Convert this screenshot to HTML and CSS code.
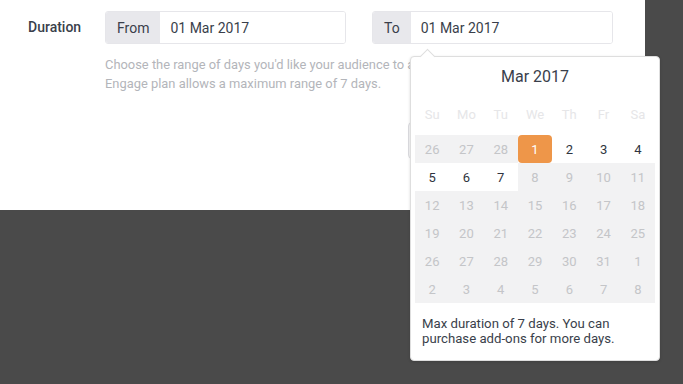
FILE: index.html
```html
<!DOCTYPE html>
<html lang="en">
<head>
  <meta charset="UTF-8">
  <title>Duration</title>
  <link rel="stylesheet" href="styles.css">
</head>
<body>
  <div class="panel">
    <div class="field">
      <label class="field-label">Duration</label>
      <div class="field-body">
        <div class="range">
          <div class="input-group from">
            <span class="addon">From</span>
            <input type="text" value="01 Mar 2017">
          </div>
          <div class="input-group to">
            <span class="addon">To</span>
            <input type="text" value="01 Mar 2017">
          </div>
        </div>
        <p class="help">Choose the range of days you'd like your audience to a<br>Engage plan allows a maximum range of 7 days.</p>
        <div class="actions">
          <button class="btn" aria-label="Save"></button>
        </div>
      </div>
    </div>
  </div>

  <div class="datepicker">
    <div class="dp-title">Mar 2017</div>
    <div class="dp-weekdays">
      <span>Su</span><span>Mo</span><span>Tu</span><span>We</span><span>Th</span><span>Fr</span><span>Sa</span>
    </div>
    <div class="dp-grid">
      <span class="day off">26</span><span class="day off">27</span><span class="day off">28</span><span class="day selected">1</span><span class="day">2</span><span class="day">3</span><span class="day">4</span>
      <span class="day">5</span><span class="day">6</span><span class="day">7</span><span class="day off">8</span><span class="day off">9</span><span class="day off">10</span><span class="day off">11</span>
      <span class="day off">12</span><span class="day off">13</span><span class="day off">14</span><span class="day off">15</span><span class="day off">16</span><span class="day off">17</span><span class="day off">18</span>
      <span class="day off">19</span><span class="day off">20</span><span class="day off">21</span><span class="day off">22</span><span class="day off">23</span><span class="day off">24</span><span class="day off">25</span>
      <span class="day off">26</span><span class="day off">27</span><span class="day off">28</span><span class="day off">29</span><span class="day off">30</span><span class="day off">31</span><span class="day off">1</span>
      <span class="day off">2</span><span class="day off">3</span><span class="day off">4</span><span class="day off">5</span><span class="day off">6</span><span class="day off">7</span><span class="day off">8</span>
    </div>
    <p class="dp-note">Max duration of 7 days. You can purchase add-ons for more days.</p>
  </div>
</body>
</html>
```

FILE: styles.css
```css
* {
  box-sizing: border-box;
  font-family: Roboto, 'Liberation Sans', sans-serif;
}

body {
  margin: 0;
  background: #4a4a4a;
  width: 683px;
  height: 384px;
  overflow: hidden;
  position: relative;
}

.panel {
  width: 645px;
  height: 210px;
  background: white;
  padding: 11px 0 0 28px;
}

.field {
  display: flex;
}

.field-label {
  width: 77px;
  padding-top: 8px;
  font-size: 14px;
  font-weight: 500;
  color: #3a3f4b;
}

.range {
  display: flex;
  gap: 26px;
}

.input-group {
  display: flex;
  width: 241px;
  height: 33px;
  border: 1px solid #e6e6ea;
  border-radius: 3px;
  overflow: hidden;
}

.addon {
  display: flex;
  align-items: center;
  background: #e8e8ec;
  color: #3a3f4b;
  font-size: 14px;
  padding: 0 11px;
}

.input-group input {
  flex: 1;
  min-width: 0;
  border: none;
  outline: none;
  padding: 0 10px;
  font-size: 14px;
  color: #3a3f4b;
  background: white;
}

.help {
  margin: 11px 0 0;
  font-size: 12.9px;
  line-height: 19px;
  color: #b3b5ba;
}

.actions {
  display: flex;
  justify-content: flex-end;
  width: 540px;
  margin-top: 29px;
}

.btn {
  width: 237px;
  height: 37px;
  border: 1px solid #dcdce0;
  border-radius: 4px;
  background: #f6f6f7;
}

.datepicker {
  position: absolute;
  left: 410px;
  top: 56px;
  width: 250px;
  height: 305px;
  background: white;
  border: 1px solid #dedede;
  border-radius: 4px;
  box-shadow: 0 1px 3px rgba(0,0,0,0.15);
  padding: 0 4px;
}

.datepicker::before {
  content: "";
  position: absolute;
  left: 11px;
  top: -6px;
  width: 10px;
  height: 10px;
  background: white;
  border-left: 1px solid #dedede;
  border-top: 1px solid #dedede;
  transform: rotate(45deg);
}

.dp-title {
  text-align: center;
  font-size: 16px;
  color: #3a3f4b;
  padding-top: 10px;
  height: 47px;
}

.dp-weekdays {
  display: grid;
  grid-template-columns: repeat(7, 1fr);
  width: 240px;
  height: 31px;
  padding-top: 3px;
  font-size: 13px;
  color: #e6e6e8;
  text-align: center;
}

.dp-grid {
  display: grid;
  grid-template-columns: repeat(7, 1fr);
  grid-auto-rows: 28px;
  width: 240px;
}

.day {
  display: flex;
  align-items: center;
  justify-content: center;
  font-size: 13px;
  color: #2f3440;
}

.day.off {
  background: #f2f2f3;
  color: #c4c5c8;
}

.day.selected {
  background: #ee9649;
  color: white;
  border-radius: 4px;
}

.dp-note {
  margin: 13px 0 0 7px;
  font-size: 13.2px;
  line-height: 15px;
  color: #3a3f4b;
}
```
